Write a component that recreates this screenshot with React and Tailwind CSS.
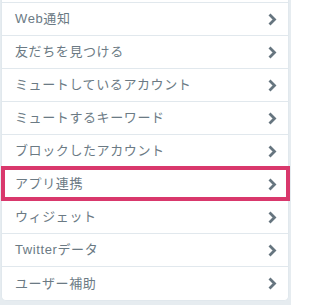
import React from 'react'

const ITEMS = [
  'Web通知',
  '友だちを見つける',
  'ミュートしているアカウント',
  'ミュートするキーワード',
  'ブロックしたアカウント',
  'アプリ連携',
  'ウィジェット',
  'Twitterデータ',
  'ユーザー補助',
]

function Chevron() {
  return (
    <svg width="10" height="13" viewBox="0 0 10 13" className="shrink-0">
      <path d="M2.5 1.5 L7.5 6.5 L2.5 11.5" fill="none" stroke="#66757f" strokeWidth="2.8" strokeLinejoin="miter" />
    </svg>
  )
}

function Row({ label, selected }) {
  return (
    <div className="relative flex items-center justify-between h-[33px] border-b border-[#e1e8ed] pl-[13px] pr-[11px] bg-white">
      <span className="text-[13px] tracking-[0.6px] text-[#6b7a84]">{label}</span>
      <Chevron />
      {selected && (
        <div className="absolute -left-[1px] -right-[2px] -top-[2px] -bottom-[1px] border-[4px] border-[#d9386c] pointer-events-none" />
      )}
    </div>
  )
}

export default function App() {
  return (
    <div
      className="w-[291px] h-[305px] bg-[#e6ecf0] overflow-hidden"
      style={{ fontFamily: '"Liberation Sans", "Noto Sans CJK JP", sans-serif' }}
    >
      <div className="ml-[1px] mr-[2px] bg-white border-x border-b border-[#e1e8ed] rounded-b-[5px]">
        <div className="h-[3px] border-b border-[#e1e8ed]" />
        {ITEMS.map((item, i) => (
          <div key={item} className={i === ITEMS.length - 1 ? '[&>div]:border-b-0 [&>div]:rounded-b-[5px]' : ''}>
            <Row label={item} selected={item === 'アプリ連携'} />
          </div>
        ))}
      </div>
    </div>
  )
}
